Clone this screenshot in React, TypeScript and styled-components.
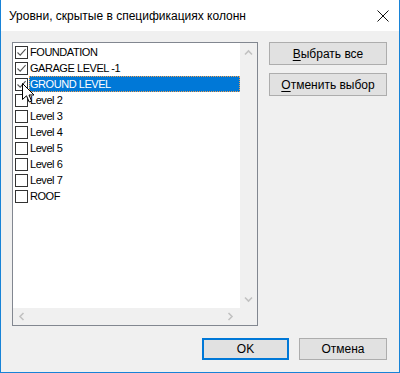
import React from 'react';
import styled, { createGlobalStyle } from 'styled-components';

const GlobalStyle = createGlobalStyle`
  html, body {
    margin: 0;
    padding: 0;
    background: #ffffff;
  }
  * {
    box-sizing: border-box;
  }
`;

interface Level {
  name: string;
  checked: boolean;
  selected?: boolean;
}

const levels: Level[] = [
  { name: 'FOUNDATION', checked: true },
  { name: 'GARAGE LEVEL -1', checked: true },
  { name: 'GROUND LEVEL', checked: true, selected: true },
  { name: 'Level 2', checked: false },
  { name: 'Level 3', checked: false },
  { name: 'Level 4', checked: false },
  { name: 'Level 5', checked: false },
  { name: 'Level 6', checked: false },
  { name: 'Level 7', checked: false },
  { name: 'ROOF', checked: false },
];

const Chevron: React.FC<{ dir: 'up' | 'down' | 'left' | 'right' }> = ({ dir }) => {
  const rot = { up: 0, right: 90, down: 180, left: 270 }[dir];
  return (
    <svg width='9' height='9' viewBox='0 0 9 9' style={{ transform: `rotate(${rot}deg)` }}>
      <path d='M1 6.5 L4.5 3 L8 6.5' fill='none' stroke='#c2c2c2' strokeWidth='1.6' />
    </svg>
  );
};

const CheckMark = () => (
  <svg width='11' height='11' viewBox='0 0 11 11'>
    <path d='M1.5 5.5 L4.2 8.2 L9.6 2.2' fill='none' stroke='#555' strokeWidth='1.1' />
  </svg>
);

const App: React.FC = () => {
  return (
    <>
      <GlobalStyle />
      <Window>
        <TitleBar>
          <Title>Уровни, скрытые в спецификациях колонн</Title>
          <CloseButton>
            <svg width='12' height='12' viewBox='0 0 12 12'>
              <path d='M0.5 0.5 L11.5 11.5 M11.5 0.5 L0.5 11.5' stroke='#111' strokeWidth='1' />
            </svg>
          </CloseButton>
        </TitleBar>
        <Body>
          <Main>
            <ListBox>
              <Items>
                {levels.map((l) => (
                  <Row key={l.name}>
                    <CheckBox>{l.checked && <CheckMark />}</CheckBox>
                    <Label $selected={l.selected}>{l.name}</Label>
                  </Row>
                ))}
              </Items>
              <VScroll>
                <Chevron dir='up' />
                <Chevron dir='down' />
              </VScroll>
              <HScroll>
                <Chevron dir='left' />
                <Chevron dir='right' />
              </HScroll>
              <Corner />
              <Cursor>
                <svg width='13' height='20' viewBox='0 0 13 20'>
                  <path
                    d='M0.5 0.5 L0.5 16.5 L4.5 12.8 L7.2 19 L9.6 18 L7 12 L12 12 Z'
                    fill='#fff'
                    stroke='#000'
                    strokeWidth='1'
                  />
                </svg>
              </Cursor>
            </ListBox>
            <SideButtons>
              <Button>
                <u>В</u>ыбрать все
              </Button>
              <Button>
                <u>О</u>тменить выбор
              </Button>
            </SideButtons>
          </Main>
          <Footer>
            <Button $primary $width={87}>OK</Button>
            <Button $width={88}>Отмена</Button>
          </Footer>
        </Body>
      </Window>
    </>
  );
};

export default App;

const Window = styled.div`
  width: 400px;
  height: 373px;
  display: flex;
  flex-direction: column;
  background: #f0f0f0;
  border: 1px solid #1883d7;
  border-top: none;
  font-family: 'Segoe UI', 'Liberation Sans', Arial, sans-serif;
  font-size: 12px;
  color: #000;
`;

const TitleBar = styled.div`
  height: 31px;
  background: #ffffff;
  display: flex;
  align-items: center;
  justify-content: space-between;
  padding: 0 9px 0 8px;
`;

const Title = styled.div`
  font-size: 12px;
`;

const CloseButton = styled.div`
  width: 12px;
  height: 12px;
  display: flex;
  margin-right: 1px;
`;

const Body = styled.div`
  flex: 1;
  display: flex;
  flex-direction: column;
  padding: 11px 12px 12px 11px;
`;

const Main = styled.div`
  display: flex;
  gap: 11px;
`;

const ListBox = styled.div`
  position: relative;
  width: 246px;
  height: 284px;
  border: 1px solid #828790;
  display: grid;
  grid-template-columns: 1fr 17px;
  grid-template-rows: 1fr 17px;
  background: #fff;
`;

const Items = styled.div`
  padding: 1px 0 0 2px;
  font-family: 'Liberation Sans', Arial, sans-serif;
  font-size: 11px;
  letter-spacing: -0.45px;
`;

const Row = styled.div`
  height: 16px;
  display: flex;
  align-items: center;
`;

const CheckBox = styled.div`
  width: 13px;
  height: 13px;
  border: 1px solid #333;
  background: #fff;
  display: flex;
  align-items: center;
  justify-content: center;
  flex-shrink: 0;
`;

const Label = styled.div<{ $selected?: boolean }>`
  height: 16px;
  line-height: 16px;
  margin-left: 1px;
  padding-left: 1px;
  flex: ${(p) => (p.$selected ? 1 : 'none')};
  background: ${(p) => (p.$selected ? '#0078d7' : 'transparent')};
  color: ${(p) => (p.$selected ? '#fff' : '#000')};
  outline: ${(p) => (p.$selected ? '1px dotted #f0a050' : 'none')};
  outline-offset: -1px;
`;

const VScroll = styled.div`
  background: #f0f0f0;
  display: flex;
  flex-direction: column;
  align-items: center;
  justify-content: space-between;
  padding: 5px 0 4px;
`;

const HScroll = styled.div`
  background: #f0f0f0;
  display: flex;
  align-items: center;
  justify-content: space-between;
  padding: 0 5px 0 4px;
`;

const Corner = styled.div`
  background: #f0f0f0;
`;

const Cursor = styled.div`
  position: absolute;
  left: 9px;
  top: 40px;
  width: 13px;
  height: 20px;
`;

const SideButtons = styled.div`
  display: flex;
  flex-direction: column;
  gap: 8px;
  width: 118px;
`;

const Button = styled.div<{ $primary?: boolean; $width?: number }>`
  width: ${(p) => (p.$width ? `${p.$width}px` : '100%')};
  height: 23px;
  display: flex;
  align-items: center;
  justify-content: center;
  background: #e1e1e1;
  border: ${(p) => (p.$primary ? '2px solid #0078d7' : '1px solid #adadad')};
  font-size: 12px;
  white-space: pre;

  u {
    text-underline-offset: 2px;
  }
`;

const Footer = styled.div`
  margin-top: auto;
  display: flex;
  justify-content: flex-end;
  gap: 10px;

  & > div {
    height: 22px;
  }
`;
